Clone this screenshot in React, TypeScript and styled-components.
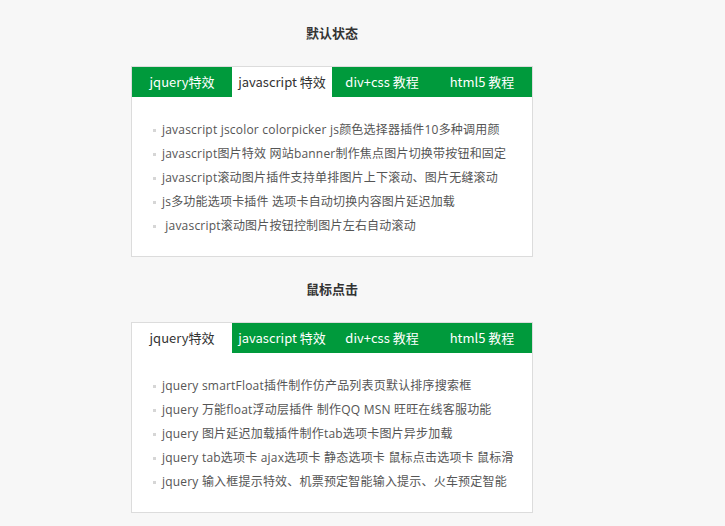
import { useState } from "react"
import styled, { createGlobalStyle } from "styled-components"

const GlobalStyle = createGlobalStyle`
    html, body {
        margin: 0;
        padding: 0;
        background: #f7f7f7;
        font-family: "Noto Sans CJK SC", "Noto Sans", sans-serif;
    }
`

const Page = styled.div`
    width: 402px;
    margin-left: 131px;
    padding-top: 23px;
`

const Title = styled.h3`
    margin: 0 0 23px;
    height: 20px;
    line-height: 20px;
    text-align: center;
    font-size: 13px;
    font-weight: bold;
    color: #333;
`

const Box = styled.div`
    border: 1px solid #dcdcdc;
    background: #fff;
    margin-bottom: 22px;
`

const TabBar = styled.ul`
    display: flex;
    margin: 0;
    padding: 0;
    list-style: none;
    background: #009a3c;
`

const Tab = styled.li<{ $active: boolean }>`
    width: 100px;
    height: 30px;
    line-height: 30px;
    text-align: center;
    font-size: 13px;
    cursor: pointer;
    color: ${(p) => (p.$active ? "#333" : "#fff")};
    background: ${(p) => (p.$active ? "#fff" : "transparent")};
`

const List = styled.ul`
    margin: 0;
    padding: 21px 8px 18px 21px;
    list-style: none;
`

const Item = styled.li`
    display: flex;
    align-items: center;
    height: 24px;
    line-height: 24px;
    font-family: "Open Sans", "Noto Sans CJK SC", sans-serif;
    font-size: 12px;
    letter-spacing: 0.2px;
    color: #555;
    white-space: pre;
    overflow: hidden;
    &::before {
        content: "";
        width: 3px;
        height: 3px;
        background: #d6d6d6;
        margin-right: 6px;
        flex: none;
    }
`

const tabs = ["jquery特效", "javascript 特效", "div+css 教程", "html5 教程"]

const jqueryItems = [
    "jquery smartFloat插件制作仿产品列表页默认排序搜索框",
    "jquery 万能float浮动层插件 制作QQ MSN 旺旺在线客服功能",
    "jquery 图片延迟加载插件制作tab选项卡图片异步加载",
    "jquery tab选项卡 ajax选项卡 静态选项卡 鼠标点击选项卡 鼠标滑",
    "jquery 输入框提示特效、机票预定智能输入提示、火车预定智能",
]

const jsItems = [
    "javascript jscolor colorpicker js颜色选择器插件10多种调用颜",
    "javascript图片特效 网站banner制作焦点图片切换带按钮和固定",
    "javascript滚动图片插件支持单排图片上下滚动、图片无缝滚动",
    "js多功能选项卡插件 选项卡自动切换内容图片延迟加载",
    " javascript滚动图片按钮控制图片左右自动滚动",
]

const content = [jqueryItems, jsItems, jqueryItems, jsItems]

const TabBox = ({ title, initial }: { title: string; initial: number }) => {
    const [active, setActive] = useState(initial)
    return (
        <>
            <Title>{title}</Title>
            <Box>
                <TabBar>
                    {tabs.map((t, i) => (
                        <Tab key={t} $active={i === active} onClick={() => setActive(i)}>{t}</Tab>
                    ))}
                </TabBar>
                <List>
                    {content[active].map((text) => <Item key={text}>{text}</Item>)}
                </List>
            </Box>
        </>
    )
}

export default function App() {
    return (
        <Page>
            <GlobalStyle />
            <TabBox title="默认状态" initial={1} />
            <TabBox title="鼠标点击" initial={0} />
        </Page>
    )
}
